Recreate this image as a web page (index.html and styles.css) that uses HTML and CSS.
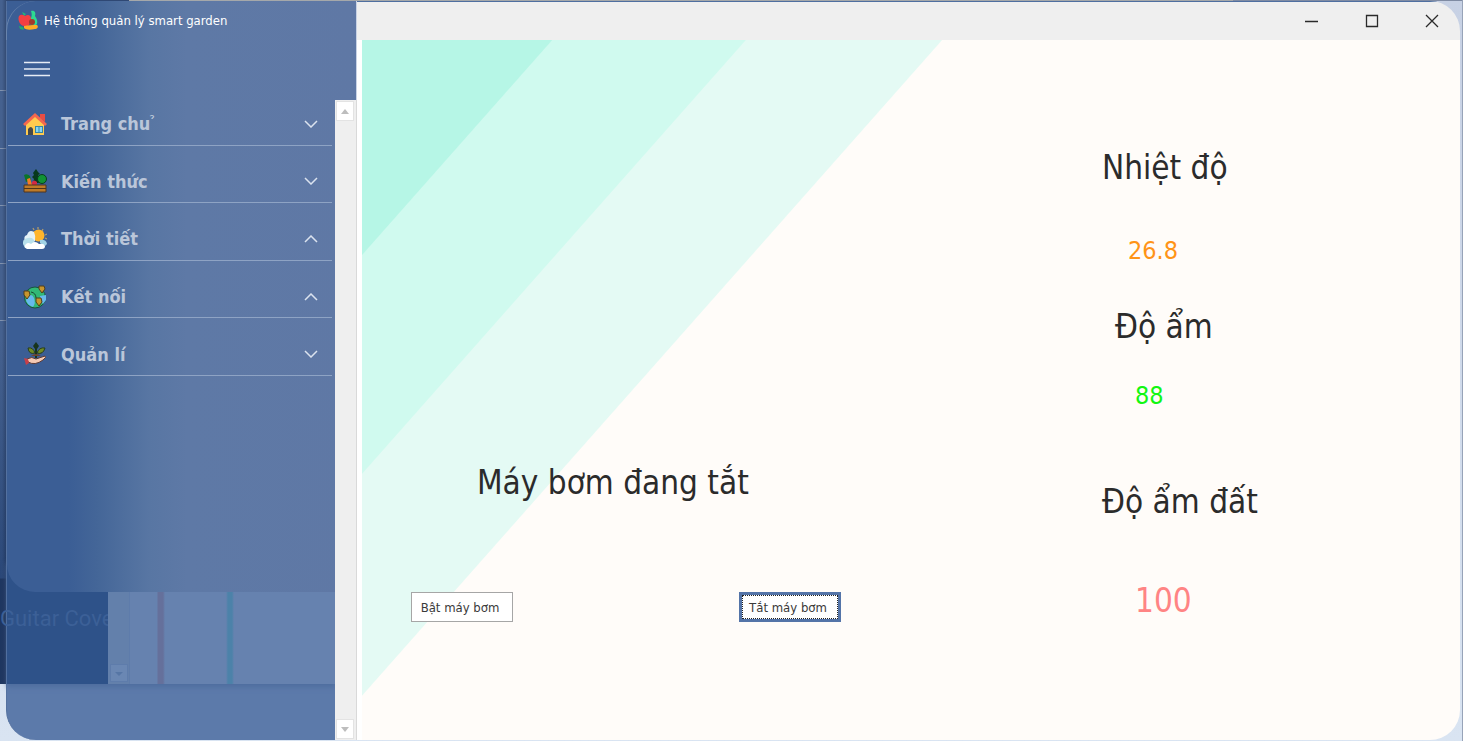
FILE: index.html
```html
<!DOCTYPE html>
<html lang="vi">
<head>
<meta charset="utf-8">
<title>Hệ thống quản lý smart garden</title>
<link rel="stylesheet" href="styles.css">
</head>
<body>
<div class="desktop">
  <div class="backdrop" aria-hidden="true">
    <div class="edge-top"></div>
    <div class="edge-left"></div>
    <div class="glass"></div>
    <div class="ghost-dark"></div>
    <div class="ghost-text">Guitar Cove</div>
    <div class="ghost-light">
      <svg class="ghost-arrow" viewBox="0 0 18 18"><rect x=".5" y=".5" width="17" height="17" fill="#6a87b3" stroke="#5e7cab"/><path d="M5 8h8l-4 4z" fill="#5676a5"/></svg>
    </div>
    <div class="ghost-window"></div>
  </div>

  <div class="window">
    <aside class="sidebar">
      <header class="brand">
        <svg class="logo" viewBox="0 0 22 22"><path d="M5 2l4 2-2 2z" fill="#20b978"/><path d="M14 1c4-1 5 2 4 5 1 2 3 4 2 8-2 3-7 2-7-1 0-5 3-6 1-12z" fill="#2cdb91"/><path d="M2 6c2-2 4-1 6 0 3-2 6-1 6 3 0 5-3 8-6 7-4 1-8-6-6-10z" fill="#f43f42"/><circle cx="15" cy="12" r="3" fill="#a33a2c"/><path d="M2 16l4 1 1 3-4-1z" fill="#1fae6d"/><path d="M7 16c4-1 9-1 13-1 2 2 0 4-2 4-5 1-9 1-11-1z" fill="#ffab24"/></svg>
        <h1 class="brand-name">Hệ thống quản lý smart garden</h1>
      </header>
      <button class="menu-toggle" type="button" aria-label="Menu">
        <svg viewBox="0 0 26 16"><path d="M0 1.500h26M0 8h26M0 14.500h26" stroke="#e6ecf5" stroke-width="1.300"/></svg>
      </button>
      <nav class="nav">
        <ul class="menu">
          <li><button class="item" type="button">
            <svg class="icon" viewBox="0 0 24 24"><path d="M17 2h5v8l-5-4z" fill="#e84d43"/><path d="M3 12l9-8 9 8v11H3z" fill="#ffcb4f"/><path d="M12 1L0 12l2 2L12 5l10 9 2-2z" fill="#f4674e"/><path d="M5 23v-6q3-4 5 0v6z" fill="#45494a"/><path d="M12 14h8v7h-8z" fill="#3486a9"/><path d="M13 15h2.500v5H13zM16.500 15H19v5h-2.500z" fill="#88d5ef"/></svg>
            <span class="label">Trang chu ̉</span>
            <svg class="chevron" viewBox="0 0 14 8"><path d="M1 1l6 6 6-6"/></svg>
          </button></li>
          <li><button class="item" type="button">
            <svg class="icon" viewBox="0 0 24 24"><path d="M13 0l2 3 2 2-2 1 2 3-2 1 1 4h-6l1-4-2-2 2-2-1-2z" fill="#07391d"/><circle cx="19" cy="10" r="4.500" fill="#119335" stroke="#073f1d"/><path d="M1 6q3-2 6 1l1 4-5 2z" fill="#0c7429"/><path d="M4 10l3-1 2 7H5z" fill="#f57b23"/><path d="M9 13q2-3 5 0v4H9z" fill="#d42844"/><path d="M1 16h22v7H1z" fill="#bd7a28" stroke="#4e3520"/><path d="M1 19.500h22" stroke="#503519"/></svg>
            <span class="label">Kiến thức</span>
            <svg class="chevron" viewBox="0 0 14 8"><path d="M1 1l6 6 6-6"/></svg>
          </button></li>
          <li><button class="item" type="button">
            <svg class="icon" viewBox="0 0 24 24"><path d="M15 0v2M20 2l-1 2M24 7l-2 1M24 12l-2-1M10 1l1 2" stroke="#b09a6c" stroke-width="1.300"/><circle cx="15.500" cy="8.500" r="6" fill="#ffb52b"/><path d="M2 14Q0 9 4 8q2-6 7-3 2 4 1 9z" fill="#e5f2f7"/><path d="M0 17q-1-5 5-6 6-1 7 5v5H2z" fill="#b9e0eb"/><path d="M17 13q6-1 7 4l-2 2-5-3z" fill="#a1d2e4"/><path d="M4 22q-4-2-1-5 2-2 5 0 4-4 8 0 5-1 6 2 0 3-3 3z" fill="#fff"/></svg>
            <span class="label">Thời tiết</span>
            <svg class="chevron" viewBox="0 0 14 8"><path d="M1 7l6-6 6 6"/></svg>
          </button></li>
          <li><button class="item" type="button">
            <svg class="icon" viewBox="0 0 24 24"><circle cx="12" cy="12.500" r="10.500" fill="#32b876" stroke="#17533f"/><path d="M5 11q4-3 6 2t-1 9q-6-2-7-7zM17 11l6-1v5l-3 4-3-4z" fill="#67b9ec"/><path d="M8 7q5 1 5 6" stroke="#164b34" fill="none"/><g fill="#c7952e" stroke="#513e1b"><path d="M16 1h5l1 3-3 4-3-4zM1 6h5l1 4-3 4-3-4zM13 13h5l1 4-3 4-3-4z"/></g></svg>
            <span class="label">Kết nối</span>
            <svg class="chevron" viewBox="0 0 14 8"><path d="M1 7l6-6 6 6"/></svg>
          </button></li>
          <li><button class="item" type="button">
            <svg class="icon" viewBox="0 0 24 24"><path d="M13 0l3 4-2 3v9h-2V7l-2-3z" fill="#17341d"/><path d="M5 6q5-1 7 5-6 2-7-5zM22 6q-6-1-8 5 6 2 8-5z" fill="#708b25" stroke="#283d1b"/><path d="M8 14q5-4 10 0z" fill="#6c432d"/><path d="M4 17q5-3 9 0l9-3q2 1-2 4-8 6-15 2z" fill="#f4c9b3" stroke="#5e3b36"/><path d="M1 16l4 1 1 4-3 2z" fill="#c73f49"/></svg>
            <span class="label">Quản lí</span>
            <svg class="chevron" viewBox="0 0 14 8"><path d="M1 1l6 6 6-6"/></svg>
          </button></li>
        </ul>
        <div class="scrollbar">
          <button class="scroll-step" type="button" aria-label="Cuộn lên"><svg viewBox="0 0 8 5"><path d="M0 5l4-5 4 5z"/></svg></button>
          <button class="scroll-step" type="button" aria-label="Cuộn xuống"><svg viewBox="0 0 8 5"><path d="M0 0l4 5 4-5z"/></svg></button>
        </div>
      </nav>
    </aside>

    <div class="pane">
      <div class="titlebar">
        <button class="caption" type="button" aria-label="Thu nhỏ"><svg viewBox="0 0 14 14"><path d="M0 7.500h13"/></svg></button>
        <button class="caption" type="button" aria-label="Phóng to"><svg viewBox="0 0 14 14"><path d="M1.500 1.500h11v11h-11z"/></svg></button>
        <button class="caption" type="button" aria-label="Đóng"><svg viewBox="0 0 14 14"><path d="M1 1l12 12M13 1L1 13"/></svg></button>
      </div>
      <main class="content">
        <section class="pump">
          <p class="heading pump-status">Máy bơm đang tắt</p>
          <div class="pump-actions">
            <button class="action" type="button">Bật máy bơm</button>
            <button class="action focused" type="button">Tắt máy bơm</button>
          </div>
        </section>
        <dl class="sensors">
          <div class="sensor temperature">
            <dt class="heading">Nhiệt độ</dt>
            <dd class="reading">26.8</dd>
          </div>
          <div class="sensor humidity">
            <dt class="heading">Độ ẩm</dt>
            <dd class="reading">88</dd>
          </div>
          <div class="sensor soil">
            <dt class="heading">Độ ẩm đất</dt>
            <dd class="reading">100</dd>
          </div>
        </dl>
      </main>
    </div>
  </div>
</div>
</body>
</html>
```

FILE: styles.css
```css
* { box-sizing: border-box; }

body {
  margin: 0;
  font-family: "DejaVu Sans Condensed", "DejaVu Sans", "Open Sans", sans-serif;
  color: #2b2b2b;
}

button {
  margin: 0;
  padding: 0;
  border: 0;
  background: none;
  font: inherit;
  color: inherit;
}

h1, p, ul, dl, dd { margin: 0; padding: 0; }
ul { list-style: none; }

.desktop {
  position: relative;
  display: flex;
  min-height: 100vh;
  padding: 1px 2px 1px 6px;
  overflow: hidden;
  background: linear-gradient(#c7d1e4, #d9e4f2);
  border-right: 1px solid #97a3b8;
}

/* Windows seen behind the translucent sidebar */
.backdrop > * { position: absolute; }

.edge-top {
  inset: 0 0 auto 0;
  height: 1px;
  background: linear-gradient(90deg, #2f4874 129px, #a5a8aa 129px 1233px, #7f8ba3 1233px);
}

.edge-left {
  left: 0;
  top: 0;
  width: 6px;
  height: 684px;
  background:
    linear-gradient(90deg, transparent 2px, rgba(20, 35, 65, .35)),
    repeating-linear-gradient(transparent 0 90px, #8293af 90px 91px, transparent 91px 148px, #8293af 148px 149px, transparent 149px 205px, #8293af 205px 206px, transparent 206px 263px, #8293af 263px 264px, transparent 264px 320px, #8293af 320px 321px, transparent 321px 700px),
    linear-gradient(#45618f 0 340px, #2b4878 578px, #1f3760 579px);
}

.glass {
  left: 6px;
  top: 1px;
  bottom: 1px;
  width: 350px;
  border-left: 1px solid #54719f;
  border-bottom-left-radius: 30px;
  background: #5c7aaa;
}

.ghost-dark {
  left: 7px;
  top: 560px;
  width: 328px;
  height: 124px;
  background: #2e5289;
  box-shadow: 0 3px 5px #4e6e9f;
}

.ghost-light {
  left: 108px;
  top: 560px;
  width: 227px;
  height: 124px;
  background: linear-gradient(90deg, #6380ab 21px, #5e7cab 21px 22px, #6682af 22px 49px, #65709b 50px 55px, #6682af 57px 118px, #4c82a9 120px 124px, #6682af 126px);
}

.ghost-arrow {
  position: absolute;
  left: 2px;
  bottom: 2px;
  width: 18px;
  height: 18px;
}

.ghost-text {
  left: 0;
  top: 604px;
  white-space: nowrap;
  font: 22px/30px Roboto, sans-serif;
  color: #3c6097;
}

.ghost-window {
  left: 7px;
  top: 1px;
  width: 349px;
  height: 591px;
  border-radius: 0 0 0 28px;
  background: linear-gradient(90deg, #3b5e95 0 62px, #446698 90px, #5876a3 142px, #5e79a6 180px, #5f78a5);
}

.window {
  position: relative;
  display: flex;
  flex: 1;
}

.sidebar {
  display: flex;
  flex-direction: column;
  flex: 0 0 351px;
}

.brand {
  display: flex;
  align-items: center;
  gap: 5px;
  height: 39px;
  padding-left: 10px;
  border-top-left-radius: 30px;
  border-left: 1px solid #6984ac;
}

.logo { width: 22px; height: 22px; }

.brand-name {
  font-size: 13px;
  font-weight: 400;
  color: #fff;
  white-space: nowrap;
}

.menu-toggle {
  display: flex;
  align-items: center;
  width: 62px;
  height: 48px;
  padding: 10px 18px 0;
}

.menu-toggle svg { width: 26px; height: 16px; }

.nav {
  display: grid;
  grid-template-columns: 1fr 22px;
  flex: 1;
}

.menu {
  display: grid;
  grid-auto-rows: 1fr;
  height: 288px;
  padding: 0 3px 0 2px;
}

.menu li {
  display: grid;
  border-bottom: 1px solid #8ea3c4;
}

.item {
  display: flex;
  align-items: center;
  gap: 14px;
  padding: 15px 14px 0 15px;
  font-size: 18px;
  font-weight: 700;
  text-align: left;
  color: #bac6d9;
}

.icon { width: 24px; height: 24px; }

.label { flex: 1; white-space: nowrap; }

.chevron {
  width: 14px;
  height: 8px;
  fill: none;
  stroke: #dbe3ef;
  stroke-width: 1.5;
}

.scrollbar {
  display: flex;
  flex-direction: column;
  justify-content: space-between;
  margin-top: 12px;
  padding: 1px 2px 1px 1px;
  background: #efefef;
  border-right: 1px solid #d9d9d9;
}

.scroll-step {
  display: flex;
  align-items: center;
  justify-content: center;
  height: 20px;
  background: #fff;
  border: 1px solid #e3e3e3;
}

.scroll-step svg { width: 8px; height: 5px; fill: #bdbdbd; }

.pane {
  display: flex;
  flex-direction: column;
  flex: 1;
  overflow: hidden;
  border-radius: 0 30px 30px 0;
}

.titlebar {
  display: flex;
  justify-content: flex-end;
  gap: 32px;
  height: 39px;
  padding-right: 14px;
  background: #efefef;
  border-top: 1px solid #4f6fa0;
}

.caption {
  display: flex;
  align-items: center;
  justify-content: center;
  width: 28px;
}

.caption svg {
  width: 14px;
  height: 14px;
  fill: none;
  stroke: #2a2a2a;
  stroke-width: 1.3;
}

.content {
  display: flex;
  justify-content: space-between;
  flex: 1;
  border-left: 5px solid #fff;
  background: linear-gradient(131.5deg, #b6f6e6 142px, #d0faef 143px 287px, #e4faf4 288px 434px, #fffcf9 435px);
}

.heading {
  font-size: 33px;
  font-weight: 400;
  line-height: 40px;
  white-space: nowrap;
}

.pump {
  display: flex;
  flex-direction: column;
  width: 479px;
  padding: 423px 0 0 49px;
}

.pump-status { padding-left: 66px; }

.pump-actions {
  display: flex;
  justify-content: space-between;
  margin-top: 89px;
}

.action {
  width: 102px;
  height: 30px;
  padding: 0 4px 0 0;
  border: 1px solid #a6a6a6;
  background: #fff;
  font-size: 13px;
  color: #3a3a3a;
  white-space: nowrap;
}

.action.focused {
  border: 3px solid #5474a8;
  outline: 1px dotted #222;
  outline-offset: -4px;
}

.sensors {
  display: flex;
  flex-direction: column;
  flex: 0 0 358px;
  padding-top: 108px;
}

.sensor {
  display: flex;
  flex-direction: column;
}

.reading { font-size: 25px; line-height: 40px; }

.temperature { gap: 43px; }
.temperature .reading { padding-left: 26px; color: #ff9417; }

.humidity { gap: 29px; margin-top: 36px; }
.humidity .heading { padding-left: 13px; }
.humidity .reading { padding-left: 33px; color: #12f612; }

.soil { gap: 59px; margin-top: 66px; }
.soil .reading { padding-left: 33px; font-size: 33px; color: #ff8484; }
```
